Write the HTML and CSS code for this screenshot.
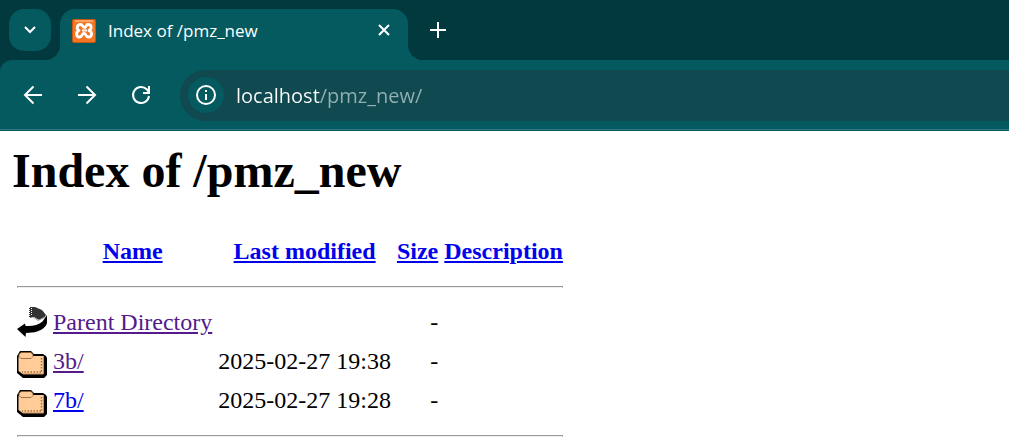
FILE: index.html
```html
<!DOCTYPE html>
<html lang="en">
<head>
<meta charset="utf-8">
<meta name="viewport" content="width=device-width, initial-scale=1">
<title>Index of /pmz_new</title>
<link rel="stylesheet" href="styles.css">
</head>
<body>
<svg class="sprites" aria-hidden="true">
  <symbol id="folder" viewBox="0 0 30 33">
    <path fill="#000" d="M3 6h11l3 3h9l3 2 1 2v17l-3 3H6l-6-5V11z"/>
    <path fill="#ffcc99" d="M1.500 12l2-1h23v18H5.500l-4-3z"/>
    <path fill="#ffcc99" stroke="#8a5a2c" stroke-width=".8" d="M4 7.500h10l2 2v2l-2 2H4l-2-2v-2z"/>
    <path fill="none" stroke="#a0703c" stroke-width="1.500" stroke-dasharray="1.500 1.500" d="M24.500 13v14M24 27H5"/>
    <path fill="none" stroke="#c48f5c" d="M26.500 11v18H6"/>
  </symbol>
  <symbol id="back" viewBox="0 0 30 33">
    <path fill="#333" d="M12 1h6l7 3 4 5-2 3-5 2-5-3-5 1z"/>
    <path fill="none" stroke="#fff" stroke-width="1" stroke-dasharray="1 1" d="M12.500 1v12M14.500 2v8"/>
    <path fill="none" stroke="#aaa" d="M16 11l5 3.500 6-3"/>
    <path fill="#000" d="M30 9v8c-1 5-8 9-15 9.500l-6 .5-.5 4L0 23l8-5.500.5 2.500c7 .5 13-1 17-4.500z"/>
  </symbol>
</svg>

<header class="browser">
  <div class="tab-strip">
    <button class="tab-search" aria-label="Search tabs">
      <svg width="14" height="10" viewBox="0 0 14 10"><path class="line" d="M2 2l5 5 5-5"/></svg>
    </button>
    <div class="tab">
      <svg class="favicon" width="24" height="24" viewBox="0 0 24 24">
        <rect width="24" height="24" rx="2" fill="#c9560f"/>
        <rect x="1" y="1" width="22" height="22" rx="1" fill="#f37623"/>
        <path d="M3 2h18" stroke="#ffd2b0"/>
        <path fill="none" stroke="#fff" stroke-width="2.800" stroke-linejoin="round" stroke-linecap="round" d="M7 11.500C4 10 5 5.500 8.500 5.500c2.500 0 2 3 4 3s1-3 3.500-3c4 0 4 4.500 1 6 4 1.500 3 6.500-.5 6.500-3.500 0-2-3.500-4.500-3.500S10.500 18 7.500 18c-3.500 0-4-5-.5-6.500z"/>
        <path d="M10 11.500h5" stroke="#fff" stroke-width="2"/>
      </svg>
      <span class="tab-title">Index of /pmz_new</span>
      <button class="icon-button" aria-label="Close tab">
        <svg width="14" height="14" viewBox="0 0 14 14"><path class="line" d="M2 1l10 10M12 1L2 11"/></svg>
      </button>
    </div>
    <button class="icon-button new-tab" aria-label="New tab">
      <svg width="16" height="16" viewBox="0 0 16 16"><path class="line" d="M8 0v16M0 8h16"/></svg>
    </button>
  </div>
  <div class="toolbar">
    <nav class="nav-buttons" aria-label="Navigation">
      <button class="icon-button" aria-label="Back">
        <svg width="20" height="20" viewBox="0 0 20 20"><path class="line" d="M19 10H2M10.500 1.500L2 10l8.500 8.500"/></svg>
      </button>
      <button class="icon-button" aria-label="Forward">
        <svg width="20" height="20" viewBox="0 0 20 20"><path class="line" d="M1 10h17M9.500 1.500L18 10l-8.500 8.500"/></svg>
      </button>
      <button class="icon-button" aria-label="Reload">
        <svg width="20" height="20" viewBox="0 0 20 20"><path class="line" d="M18 11a8 8 0 1 1-2.300-6.700L18 7M18 1v7H12"/></svg>
      </button>
    </nav>
    <div class="address">
      <button class="site-info" aria-label="Site information">
        <svg width="20" height="20" viewBox="0 0 20 20"><circle class="line" cx="10" cy="10" r="9"/><path class="line" d="M10 9v6M10 5v2"/></svg>
      </button>
      <input class="url" type="text" aria-label="Address" value="localhost/pmz_new/" spellcheck="false">
    </div>
  </div>
</header>

<main class="listing">
  <h1 class="heading">Index of /pmz_new</h1>
  <table class="files">
    <thead>
      <tr class="head-row">
        <th></th>
        <th><a href="#name">Name</a></th>
        <th><a href="#modified">Last modified</a></th>
        <th><a href="#size">Size</a></th>
        <th><a href="#description">Description</a></th>
      </tr>
      <tr><td colspan="5"><hr class="rule"></td></tr>
    </thead>
    <tbody>
      <tr>
        <td class="kind"><svg class="file-icon" role="img" aria-label="Parent"><use href="#back"/></svg></td>
        <td><a class="visited" href="#parent">Parent Directory</a></td>
        <td></td>
        <td class="number">-</td>
        <td></td>
      </tr>
      <tr>
        <td class="kind"><svg class="file-icon" role="img" aria-label="Folder"><use href="#folder"/></svg></td>
        <td><a class="visited" href="#3b">3b/</a></td>
        <td class="number">2025-02-27 19:38</td>
        <td class="number">-</td>
        <td></td>
      </tr>
      <tr>
        <td class="kind"><svg class="file-icon" role="img" aria-label="Folder"><use href="#folder"/></svg></td>
        <td><a href="#7b">7b/</a></td>
        <td class="number">2025-02-27 19:28</td>
        <td class="number">-</td>
        <td></td>
      </tr>
      <tr><td colspan="5"><hr class="rule"></td></tr>
    </tbody>
  </table>
</main>
</body>
</html>
```
FILE: styles.css
```css
* {
  box-sizing: border-box;
}

body {
  margin: 0;
  background: #fff;
  color: #000;
  font: 24px "Liberation Serif", "Times New Roman", serif;
}

.sprites {
  display: none;
}

.browser {
  background: #02393e;
  color: #fff;
  font-family: "Open Sans", sans-serif;
}

.browser button {
  display: grid;
  place-items: center;
  padding: 0;
  border: 0;
  background: none;
  color: inherit;
}

.line {
  fill: none;
  stroke: currentColor;
  stroke-width: 2;
}

.tab-strip {
  display: flex;
  align-items: flex-start;
  height: 60px;
  padding: 9px 9px 0;
}

.browser .tab-search {
  width: 42px;
  height: 42px;
  margin-right: 9px;
  border-radius: 15px;
  background: #055a60;
}

.tab {
  position: relative;
  display: flex;
  align-items: center;
  gap: 12px;
  width: 348px;
  height: 51px;
  padding: 0 12px 8px;
  border-radius: 15px 15px 0 0;
  background: #055a60;
}

.tab::before,
.tab::after {
  content: "";
  position: absolute;
  bottom: 0;
  width: 15px;
  height: 15px;
}

.tab::before {
  right: 100%;
  background: radial-gradient(circle at 0 0, transparent 15px, #055a60 15px);
}

.tab::after {
  left: 100%;
  background: radial-gradient(circle at 100% 0, transparent 15px, #055a60 15px);
}

.tab-title {
  flex: 1;
  font-size: 17px;
}

.browser .icon-button {
  width: 24px;
  height: 24px;
}

.browser .new-tab {
  width: 42px;
  height: 42px;
  margin-left: 9px;
}

.toolbar {
  display: flex;
  align-items: center;
  gap: 27px;
  height: 71px;
  padding-left: 21px;
  border-bottom: 1px solid #055a60;
  border-radius: 12px 0 0 0;
  background: #055a60;
  box-shadow: inset 0 -1px #2b7a80;
}

.nav-buttons {
  display: flex;
  gap: 30px;
}

.address {
  display: flex;
  flex: 1;
  align-items: center;
  gap: 12px;
  height: 51px;
  padding-left: 8px;
  border-radius: 26px 0 0 26px;
  background: #10494f;
}

.browser .site-info {
  width: 36px;
  height: 36px;
  border-radius: 50%;
  background: #055a60;
}

.url {
  flex: 1;
  min-width: 0;
  padding: 0;
  border: 0;
  background: linear-gradient(to right, #fff 84px, #93b0b3 84px);
  background-clip: text;
  color: transparent;
  caret-color: #fff;
  font: 20px "Open Sans", sans-serif;
}

.listing {
  padding: 12px;
}

.heading {
  margin: 0 0 30px;
  font-size: 48px;
  line-height: 56px;
}

.files {
  border-spacing: 4px;
}

.files th,
.files td {
  padding: 1px;
}

.files a {
  color: #00e;
}

.files .visited {
  color: #551a8b;
}

.head-row {
  height: 36px;
}

.number {
  text-align: right;
}

.kind {
  vertical-align: top;
}

.file-icon {
  display: block;
  width: 30px;
  height: 33px;
}

.rule {
  margin: 12px 0;
  border: 1px solid #999;
  border-bottom-color: #eee;
}
```
